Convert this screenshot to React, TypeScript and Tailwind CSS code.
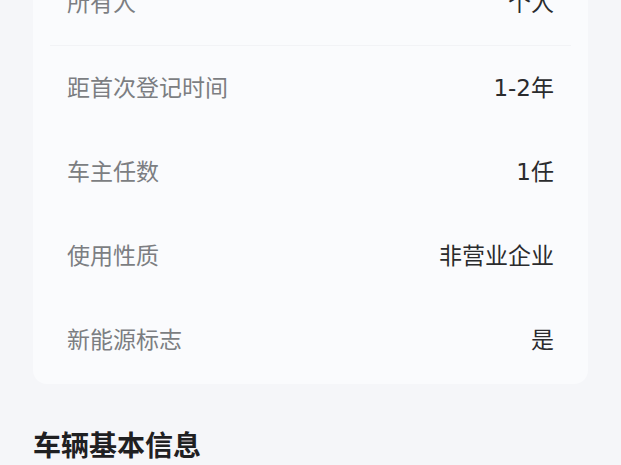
const rows = [
  { label: "所有人", value: "个人" },
  { label: "距首次登记时间", value: "1-2年" },
  { label: "车主任数", value: "1任" },
  { label: "使用性质", value: "非营业企业" },
  { label: "新能源标志", value: "是" },
];

const font = { fontFamily: '"DejaVu Sans", "Noto Sans CJK SC", sans-serif' };

export default function App() {
  return (
    <div className="min-h-[465px] h-[465px] overflow-hidden bg-[#f5f6f9]" style={font}>
      <div className="mx-[33px] -mt-[39px] rounded-[14px] bg-[#fafbfd] pb-[2px]">
        {rows.map((row, i) => (
          <div key={row.label} className={i === 0 ? "mx-[17px] border-b border-[#f2f3f6]" : ""}>
            <div className={`flex h-[84px] items-center justify-between ${i === 0 ? "px-[17px]" : "px-[34px]"}`}>
              <span className="text-[23px] text-[#7c7e82]">{row.label}</span>
              <span className="text-[23px] text-[#2a2b2d]">{row.value}</span>
            </div>
          </div>
        ))}
      </div>
      <h2 className="mt-[43px] px-[33px] text-[28px] font-bold leading-[40px] text-[#1f2022]">车辆基本信息</h2>
    </div>
  );
}
